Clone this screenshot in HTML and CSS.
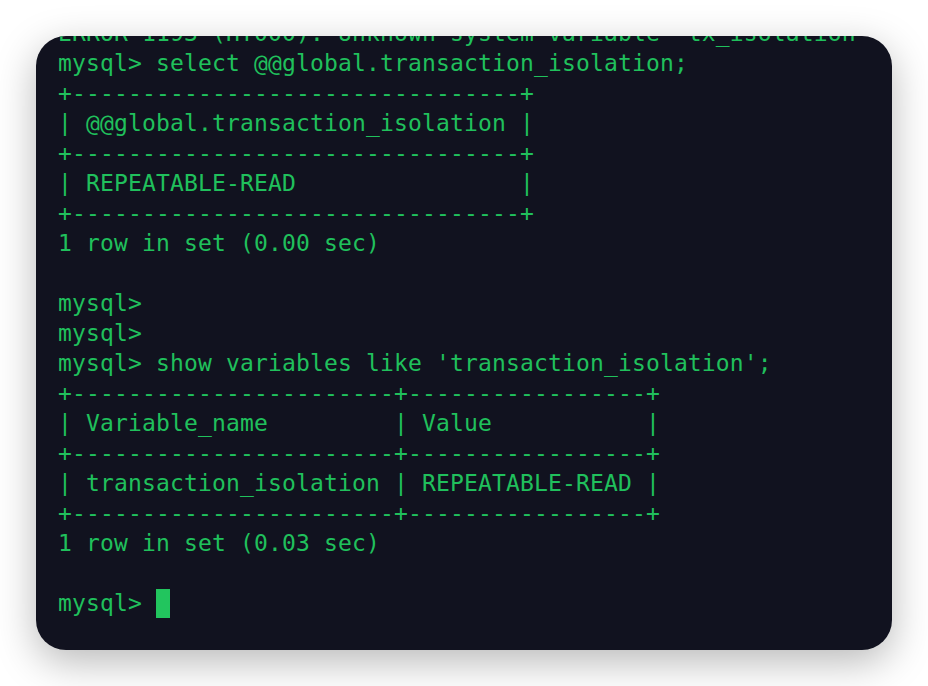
FILE: index.html
```html
<!DOCTYPE html>
<html>
<head>
<meta charset="utf-8">
<link rel="stylesheet" href="styles.css">
</head>
<body>
<div class="terminal">
<pre class="output">ERROR 1193 (HY000): Unknown system variable 'tx_isolation'
mysql&gt; select @@global.transaction_isolation;
+--------------------------------+
| @@global.transaction_isolation |
+--------------------------------+
| REPEATABLE-READ                |
+--------------------------------+
1 row in set (0.00 sec)

mysql&gt;
mysql&gt;
mysql&gt; show variables like 'transaction_isolation';
+-----------------------+-----------------+
| Variable_name         | Value           |
+-----------------------+-----------------+
| transaction_isolation | REPEATABLE-READ |
+-----------------------+-----------------+
1 row in set (0.03 sec)

mysql&gt; <span class="cursor"> </span></pre>
</div>
</body>
</html>
```
FILE: styles.css
```css
html, body {
  margin: 0;
  padding: 0;
  background: #ffffff;
}
body {
  padding: 36px;
  width: 856px;
}
.terminal {
  height: 614px;
  box-sizing: border-box;
  background: #11121f;
  border-radius: 30px;
  box-shadow: 0 12px 40px rgba(0, 0, 0, 0.28);
  overflow: hidden;
  display: flex;
  flex-direction: column;
  justify-content: flex-end;
  padding: 0 22px 32px 22px;
}
.output {
  margin: 0;
  font-family: "DejaVu Sans Mono", "Liberation Mono", monospace;
  font-size: 23px;
  letter-spacing: 0.15px;
  line-height: 30px;
  color: #20c05c;
  white-space: pre;
}
.cursor {
  display: inline-block;
  width: 14px;
  height: 29px;
  vertical-align: top;
  margin-top: 1px;
  background: #22c55e;
}
```
